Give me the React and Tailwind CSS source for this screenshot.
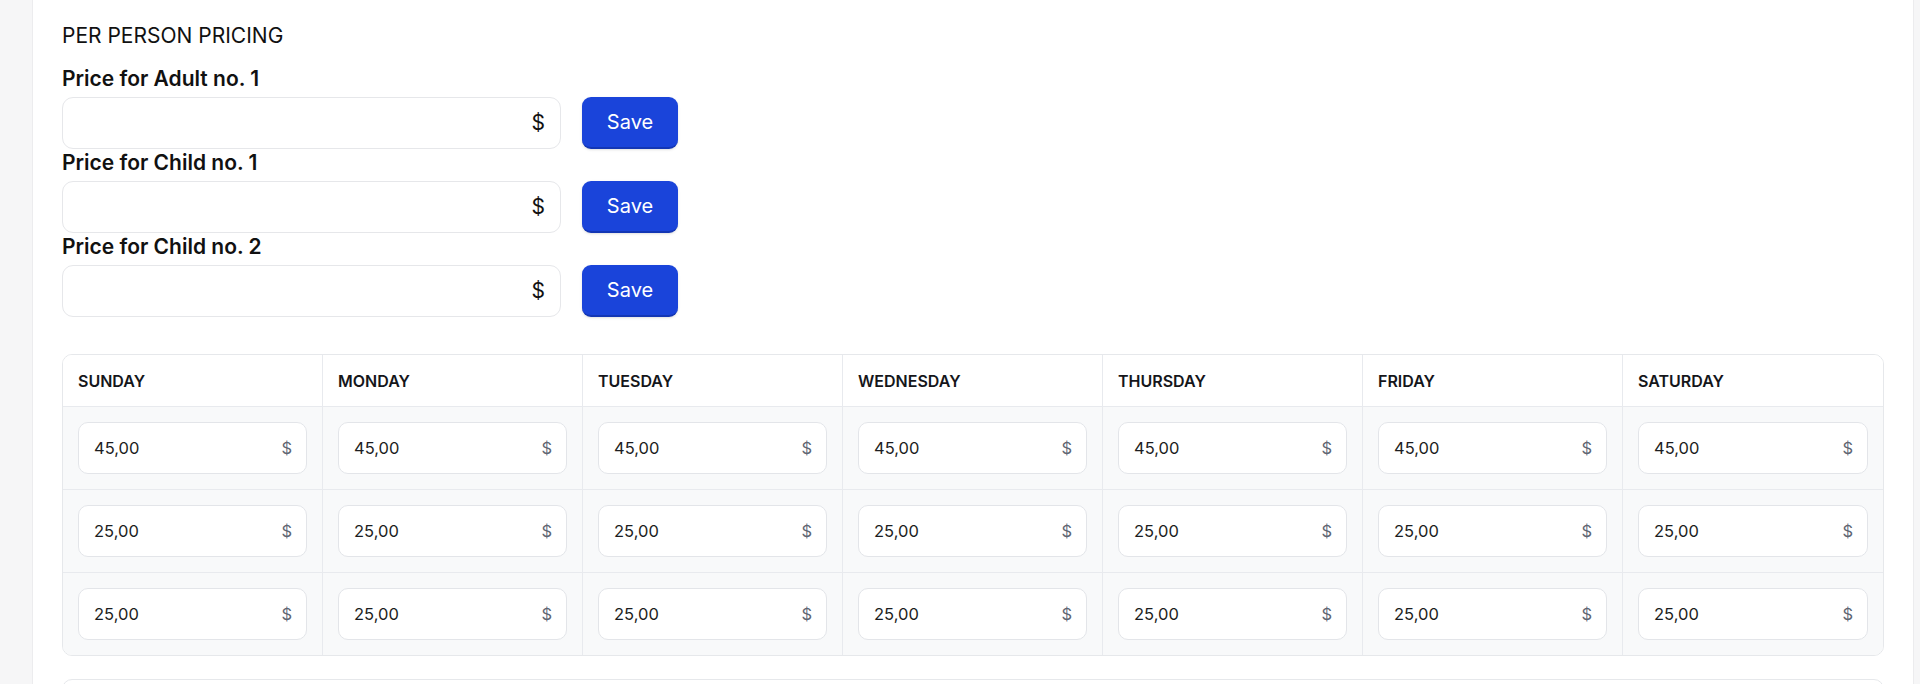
import React from "react";

const days = ["Sunday", "Monday", "Tuesday", "Wednesday", "Thursday", "Friday", "Saturday"];

const rows = ["45,00", "25,00", "25,00"];

const persons = ["Price for Adult no. 1", "Price for Child no. 1", "Price for Child no. 2"];

function PersonPrice({ label }) {

    return (

        <div>

            <label className="block text-[21px] leading-[28px] font-semibold text-[#111111] mb-1">
                {label}
            </label>

            <div className="flex items-center gap-[21px]">

                <div className="w-[499px] h-[52px] rounded-[11px] border border-[#e6e7ea] bg-white flex items-center justify-end pr-[15px]">
                    <span className="text-[21px] text-[#111111]">$</span>
                </div>

                <button className="w-[96px] h-[52px] rounded-[9px] bg-[#1a44da] border-b-2 border-[#1336b4] shadow-sm text-white text-[20px]">
                    Save
                </button>

            </div>

        </div>

    );

}

function DayCell({ value, last }) {

    return (

        <div className={last ? "p-[15px]" : "p-[15px] border-r border-[#e8eaee]"}>

            <div className="h-[52px] rounded-[10px] border border-[#e3e5e9] bg-white flex items-center justify-between pl-[15px] pr-[14px]">

                <span className="text-[16.5px] text-[#1c1d21]">{value}</span>

                <span className="text-[16.5px] text-[#5f6673]">$</span>

            </div>

        </div>

    );

}

export default function App() {

    return (

        <div className="min-h-screen bg-[#f6f6f7] flex font-['Inter',sans-serif]">

            <div className="w-[32px] shrink-0"></div>

            <div className="flex-1 bg-white border-l border-r border-[#ececee] mr-[6px] px-[29px] pt-[22px] pb-10">

                <h2 className="text-[21px] leading-[28px] text-[#111111]">
                    PER PERSON PRICING
                </h2>

                <div className="mt-[15px] flex flex-col">
                    {persons.map((p) => (
                        <PersonPrice key={p} label={p} />
                    ))}
                </div>

                <div className="mt-[37px] rounded-[10px] border border-[#e6e8eb] overflow-hidden">

                    <div className="grid grid-cols-7 bg-white border-b border-[#e8eaee]">
                        {days.map((d, i) => (
                            <div
                                key={d}
                                className={i === 6
                                    ? "h-[51px] flex items-center px-[15px] text-[16px] font-semibold uppercase text-[#15161a]"
                                    : "h-[51px] flex items-center px-[15px] text-[16px] font-semibold uppercase text-[#15161a] border-r border-[#e8eaee]"}
                            >
                                {d}
                            </div>
                        ))}
                    </div>

                    {rows.map((value, r) => (
                        <div
                            key={r}
                            className={r === rows.length - 1
                                ? "grid grid-cols-7 bg-[#f8f9fa]"
                                : "grid grid-cols-7 bg-[#f8f9fa] border-b border-[#e8eaee]"}
                        >
                            {days.map((d, i) => (
                                <DayCell key={d} value={value} last={i === 6} />
                            ))}
                        </div>
                    ))}

                </div>

                <div className="mt-[23px] h-[40px] rounded-[10px] border border-[#e6e8eb]"></div>

            </div>

        </div>

    );

}
